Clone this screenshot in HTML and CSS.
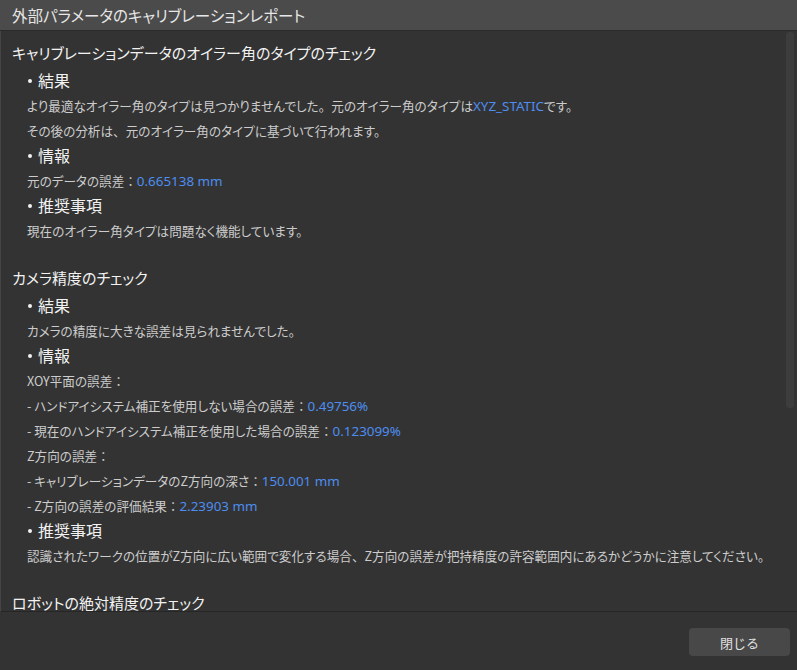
FILE: index.html
```html
<!DOCTYPE html>
<html lang="ja">
<head>
<meta charset="utf-8">
<title>外部パラメータのキャリブレーションレポート</title>
<link rel="stylesheet" href="styles.css">
</head>
<body>
<div class="dialog">
  <div class="titlebar">外部パラメータのキャリブレーションレポート</div>
  <div class="content">
    <div class="scroll">
      <section class="section">
        <h2 class="heading">キャリブレーションデータのオイラー角のタイプのチェック</h2>
        <h3 class="bullet">結果</h3>
        <p class="line">より最適なオイラー角のタイプは見つかりませんでした<span class="fw">。</span>元のオイラー角のタイプは<span class="val">XYZ_STATIC</span>です。</p>
        <p class="line">その後の分析は<span class="fw">、</span>元のオイラー角のタイプに基づいて行われます。</p>
        <h3 class="bullet">情報</h3>
        <p class="line">元のデータの誤差<span class="fw">：</span><span class="val">0.665138 mm</span></p>
        <h3 class="bullet">推奨事項</h3>
        <p class="line">現在のオイラー角タイプは問題なく機能しています。</p>
      </section>
      <section class="section">
        <h2 class="heading">カメラ精度のチェック</h2>
        <h3 class="bullet">結果</h3>
        <p class="line">カメラの精度に大きな誤差は見られませんでした。</p>
        <h3 class="bullet">情報</h3>
        <p class="line">XOY平面の誤差<span class="fw">：</span></p>
        <p class="line">- ハンドアイシステム補正を使用しない場合の誤差<span class="fw">：</span><span class="val">0.49756%</span></p>
        <p class="line">- 現在のハンドアイシステム補正を使用した場合の誤差<span class="fw">：</span><span class="val">0.123099%</span></p>
        <p class="line">Z方向の誤差<span class="fw">：</span></p>
        <p class="line">- キャリブレーションデータのZ方向の深さ<span class="fw">：</span><span class="val">150.001 mm</span></p>
        <p class="line">- Z方向の誤差の評価結果<span class="fw">：</span><span class="val">2.23903 mm</span></p>
        <h3 class="bullet">推奨事項</h3>
        <p class="line">認識されたワークの位置がZ方向に広い範囲で変化する場合<span class="fw">、</span>Z方向の誤差が把持精度の許容範囲内にあるかどうかに注意してください。</p>
      </section>
      <section class="section">
        <h2 class="heading">ロボットの絶対精度のチェック</h2>
      </section>
    </div>
    <div class="thumb"></div>
  </div>
  <div class="footer">
    <button class="btn">閉じる</button>
  </div>
</div>
</body>
</html>
```
FILE: styles.css
```css
* { box-sizing: border-box; }
html, body {
  margin: 0;
  padding: 0;
  background: #333333;
}
body {
  font-family: "Noto Sans CJK JP", "Noto Sans", sans-serif;
  font-feature-settings: "palt";
  color: #d0d0d0;
}
.dialog {
  width: 797px;
  height: 670px;
  display: flex;
  flex-direction: column;
  background: #333333;
}
.titlebar {
  height: 31px;
  flex: none;
  background: #4b4b4b;
  border-bottom: 1px solid #2a2a2a;
  color: #e6e6e6;
  font-size: 15.5px;
  line-height: 30px;
  padding-left: 12px;
}
.content {
  position: relative;
  height: 581px;
  flex: none;
  overflow: hidden;
  border-left: 1px solid #454545;
  border-bottom: 1px solid #262626;
}
.scroll {
  padding: 7px 0 0 11px;
}
.section + .section {
  margin-top: 20px;
}
.heading {
  margin: 0;
  font-size: 15px;
  font-weight: normal;
  line-height: 30px;
  color: #f2f2f2;
}
.bullet {
  margin: 0;
  font-size: 16px;
  font-weight: normal;
  line-height: 25px;
  color: #f2f2f2;
  padding-left: 26px;
  position: relative;
}
.bullet::before {
  content: "";
  position: absolute;
  left: 16px;
  top: 11px;
  width: 4px;
  height: 4px;
  border-radius: 50%;
  background: #f2f2f2;
}
.line {
  margin: 0;
  font-size: 12.6px;
  line-height: 25px;
  padding-left: 15px;
  color: #cccccc;
  white-space: nowrap;
}
.fw {
  font-feature-settings: normal;
}
.val {
  font-family: "Noto Sans", "Noto Sans CJK JP", sans-serif;
  font-size: 13.4px;
  line-height: 1;
  color: #4d8ef0;
}
.thumb {
  position: absolute;
  right: 3px;
  top: 1px;
  width: 8px;
  height: 376px;
  border-radius: 3px;
  background: #3d3d3d;
}
.footer {
  flex: 1;
  display: flex;
  justify-content: flex-end;
  align-items: flex-start;
  padding: 16px 7px 0 0;
}
.btn {
  width: 101px;
  height: 28px;
  border: none;
  border-radius: 4px;
  background: #484848;
  color: #e0e0e0;
  font-family: "Noto Sans CJK JP", sans-serif;
  font-size: 13px;
  padding: 0;
}
```
